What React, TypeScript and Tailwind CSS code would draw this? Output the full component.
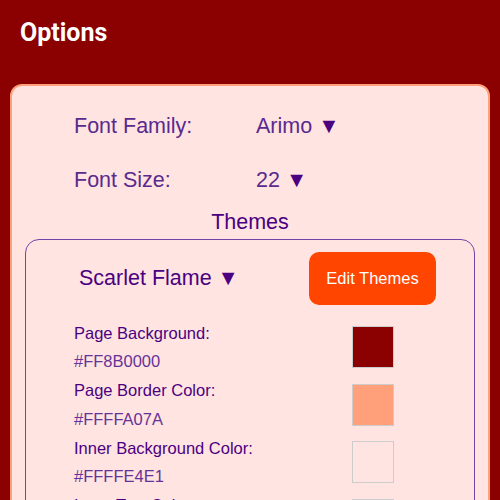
import React from "react";

const swatches = [
  { label: "Page Background:", hex: "#FF8B0000", color: "#8B0000" },
  { label: "Page Border Color:", hex: "#FFFFA07A", color: "#FFA07A" },
  { label: "Inner Background Color:", hex: "#FFFFE4E1", color: "#FFE4E1" },
  { label: "Inner Text Color:", hex: "#FF4B0082", color: "#4B0082" },
];

function Tri() {
  return <span className="text-[#4B0082]"> ▼</span>;
}

export default function App() {
  return (
    <div
      className="w-[500px] h-[500px] overflow-hidden bg-[#8B0000]"
      style={{ fontFamily: "'Liberation Sans', Arimo, Arial, sans-serif" }}
    >
      <div className="h-[66px] flex items-center pl-5">
        <span
          className="text-white text-[25px] font-bold"
          style={{ fontFamily: "Roboto, 'Liberation Sans', sans-serif" }}
        >
          Options
        </span>
      </div>
      <div className="mt-[18px] mx-[10px] border-2 border-[#FFA07A] rounded-[12px] bg-[#FFE4E1] pt-[13px] h-[600px]">
        <div className="h-[54px] flex items-center pl-[62px] text-[21.5px] text-[#5a2a8e]">
          <span className="w-[182px]">Font Family:</span>
          <span className="whitespace-pre">
            Arimo<Tri />
          </span>
        </div>
        <div className="h-[54px] flex items-center pl-[62px] text-[21.5px] text-[#5a2a8e]">
          <span className="w-[182px]">Font Size:</span>
          <span className="whitespace-pre">
            22<Tri />
          </span>
        </div>
        <div className="h-[31px] flex items-center justify-center text-[21.5px] text-[#4B0082]">
          Themes
        </div>
        <div className="mt-[1px] mx-[13px] border border-[#6e45a8] rounded-[14px] pt-[12px]">
          <div className="flex items-center h-[53px]">
            <div className="pl-[53px] w-[283px] text-[21.5px] text-[#4B0082] whitespace-pre">
              Scarlet Flame<Tri />
            </div>
            <button className="w-[127px] h-[53px] rounded-[10px] bg-[#FF4500] text-white text-[16.5px]">
              Edit Themes
            </button>
          </div>
          <div className="mt-[13.5px]">
            {swatches.map((s) => (
              <div key={s.label} className="flex items-center h-[57.5px]">
                <div className="pl-[48px] w-[326px]">
                  <div className="h-[29px] flex items-center text-[16.5px] text-[#4B0082]">
                    {s.label}
                  </div>
                  <div className="h-[28.5px] flex items-center text-[16.5px] text-[#663399]">
                    {s.hex}
                  </div>
                </div>
                <div
                  className="w-[42px] h-[42px] border border-[#cccccc]"
                  style={{ backgroundColor: s.color }}
                />
              </div>
            ))}
          </div>
        </div>
      </div>
    </div>
  );
}
